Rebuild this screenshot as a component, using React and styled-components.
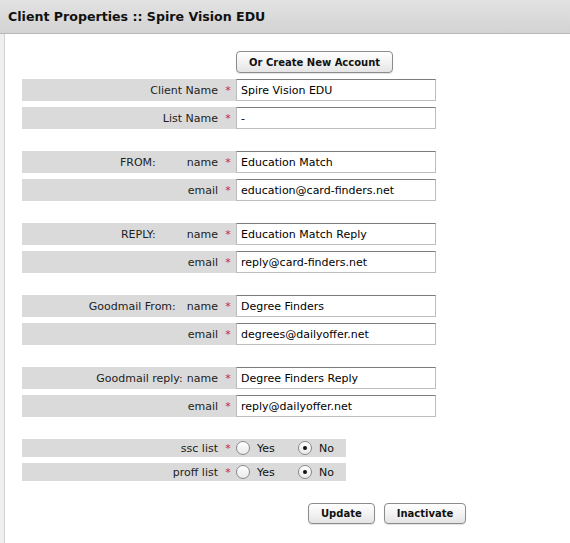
import React from 'react';
import styled, { createGlobalStyle } from 'styled-components';

const GlobalStyle = createGlobalStyle`
  html, body {
    margin: 0;
    padding: 0;
    background: #fff;
    font-family: "DejaVu Sans", Verdana, sans-serif;
  }
`;

const Header = styled.div`
  height: 33px;
  display: flex;
  align-items: center;
  padding-left: 8px;
  background: linear-gradient(#e2e2e2, #d3d3d3);
  border-bottom: 1px solid #b9b9b9;
  font-size: 12.6px;
  font-weight: bold;
  color: #111;
`;

const Frame = styled.div`
  padding-left: 4px;
  background: #efefef;
  min-height: calc(100vh - 34px);
  display: flex;
`;

const Panel = styled.div`
  flex: 1;
  background: #fff;
  border-left: 1px solid #d2d2d2;
  padding: 17px 0 20px 17px;
`;

const Form = styled.div`
  display: flex;
  flex-direction: column;
  gap: 6px;
`;

const Spacer = styled.div`
  height: 10px;
`;

const Button = styled.button`
  height: ${p => p.$h || 22}px;
  padding: 0 12px;
  border: 1px solid #8c8c8c;
  border-radius: 4px;
  background: linear-gradient(#ffffff, #f3f3f3 50%, #e4e4e4);
  font-family: "DejaVu Sans", Verdana, sans-serif;
  font-size: 10px;
  font-weight: bold;
  color: #111;
  box-shadow: 0 1px 1px rgba(0, 0, 0, 0.12);
`;

const ButtonRow = styled.div`
  display: flex;
  gap: ${p => p.$gap || 0}px;
  padding-left: ${p => p.$indent}px;
`;

const Row = styled.div`
  display: flex;
  align-items: center;
  width: ${p => p.$width}px;
  height: ${p => p.$h}px;
  background: #dadada;
`;

const Label = styled.div`
  width: 196px;
  text-align: right;
  font-size: 11px;
  color: #222;
  white-space: nowrap;
`;

const Prefix = styled.span`
  margin-right: ${p => p.$gap}px;
`;

const Star = styled.span`
  width: 18px;
  padding-left: 2px;
  box-sizing: border-box;
  text-align: center;
  font-size: 11px;
  color: #c8262b;
`;

const TextInput = styled.input`
  flex: 1;
  height: 22px;
  box-sizing: border-box;
  margin: 0;
  padding: 0 4px;
  border: 1px solid #bdbdbd;
  border-top-color: #7c7c7c;
  background: #fff;
  font-family: "DejaVu Sans", Verdana, sans-serif;
  font-size: 11px;
  color: #000;
  outline: none;
`;

const Option = styled.label`
  width: ${p => p.$w}px;
  display: flex;
  align-items: center;
  gap: 7px;
  font-size: 11px;
  color: #111;
`;

const Circle = styled.span`
  width: 14px;
  height: 14px;
  box-sizing: border-box;
  border-radius: 50%;
  border: 1px solid #8a8a8a;
  background: linear-gradient(#ffffff, #e9e9e9);
  display: flex;
  align-items: center;
  justify-content: center;

  &::after {
    content: '';
    width: 4px;
    height: 4px;
    border-radius: 50%;
    background: ${p => (p.$on ? '#111' : 'transparent')};
  }
`;

function Field({ prefix, gap, label, value }) {
  return (
    <Row $width={414} $h={22}>
      <Label>
        {prefix && <Prefix $gap={gap}>{prefix}</Prefix>}
        {label}
      </Label>
      <Star>*</Star>
      <TextInput defaultValue={value} readOnly />
    </Row>
  );
}

function RadioField({ label }) {
  return (
    <Row $width={324} $h={18}>
      <Label>{label}</Label>
      <Star>*</Star>
      <Option $w={62}><Circle />Yes</Option>
      <Option><Circle $on />No</Option>
    </Row>
  );
}

export default function App() {
  return (
    <>
      <GlobalStyle />
      <Header>Client Properties :: Spire Vision EDU</Header>
      <Frame>
        <Panel>
          <Form>
            <ButtonRow $indent={214}>
              <Button>Or Create New Account</Button>
            </ButtonRow>
            <Field label="Client Name" value="Spire Vision EDU" />
            <Field label="List Name" value="-" />
            <Spacer />
            <Field prefix="FROM:" gap={31} label="name" value="Education Match" />
            <Field label="email" value="education@card-finders.net" />
            <Spacer />
            <Field prefix="REPLY:" gap={31} label="name" value="Education Match Reply" />
            <Field label="email" value="reply@card-finders.net" />
            <Spacer />
            <Field prefix="Goodmail From:" gap={11} label="name" value="Degree Finders" />
            <Field label="email" value="degrees@dailyoffer.net" />
            <Spacer />
            <Field prefix="Goodmail reply:" gap={4} label="name" value="Degree Finders Reply" />
            <Field label="email" value="reply@dailyoffer.net" />
            <Spacer />
            <RadioField label="ssc list" />
            <RadioField label="proff list" />
            <Spacer />
            <ButtonRow $indent={286} $gap={9}>
              <Button $h={21}>Update</Button>
              <Button $h={21}>Inactivate</Button>
            </ButtonRow>
          </Form>
        </Panel>
      </Frame>
    </>
  );
}
